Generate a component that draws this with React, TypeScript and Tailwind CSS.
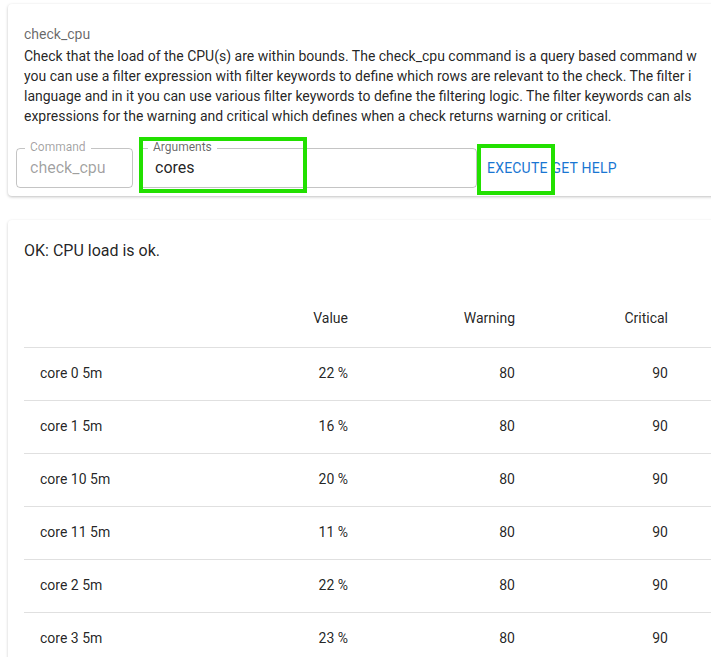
import React from 'react';

const rows = [
  ['core 0 5m', '22 %', '80', '90'],
  ['core 1 5m', '16 %', '80', '90'],
  ['core 10 5m', '20 %', '80', '90'],
  ['core 11 5m', '11 %', '80', '90'],
  ['core 2 5m', '22 %', '80', '90'],
  ['core 3 5m', '23 %', '80', '90'],
];

export default function App() {
  return (
    <div className="w-[711px] h-[657px] overflow-hidden bg-white text-[14px] text-[#000000de]" style={{ fontFamily: 'Roboto, sans-serif' }}>
      <div className="w-[740px] pl-[8px] pt-[4px]">
        <div className="relative rounded bg-white shadow-[0_1px_3px_rgba(0,0,0,0.25)] px-[16px] pt-[20px] pb-[8px]">
          <div className="text-[14px] text-[#00000099] leading-[20px]">check_cpu</div>
          <p className="mt-[2px] leading-[20px] w-[720px] whitespace-nowrap">
            Check that the load of the CPU(s) are within bounds. The check_cpu command is a query based command w<br />
            you can use a filter expression with filter keywords to define which rows are relevant to the check. The filter i<br />
            language and in it you can use various filter keywords to define the filtering logic. The filter keywords can als<br />
            expressions for the warning and critical which defines when a check returns warning or critical.
          </p>
          <div className="flex items-center mt-[22px] -ml-[8px] gap-[6px]">
            <div className="relative w-[117px] h-[40px] border border-[#0000003b] rounded px-[13px] flex items-center">
              <span className="absolute left-[8px] -top-[9px] bg-white px-[5px] text-[12px] leading-[14px] text-[#00000061]">Command</span>
              <div className="text-[16px] text-[#00000061]">check_cpu</div>
            </div>
            <div className="relative w-[338px] h-[40px] border border-[#0000003b] rounded px-[15px] flex items-center">
              <span className="absolute left-[8px] -top-[9px] bg-white px-[5px] text-[12px] leading-[14px] text-[#00000099]">Arguments</span>
              <div className="text-[16px]">cores</div>
              <div className="absolute left-[-1px] top-[-12px] w-[168px] h-[56px] border-[4px] border-[#22e000]"></div>
            </div>
            <div className="relative flex text-[14px] text-[#1976d2] uppercase tracking-[0.2px]">
              <span className="px-[4px] py-[6px]">Execute</span>
              <span className="py-[6px]">Get Help</span>
              <div className="absolute left-[-6px] top-[-8px] w-[78px] h-[51px] border-[4px] border-[#22e000]"></div>
            </div>
          </div>
        </div>
        <div className="mt-[24px] rounded bg-white shadow-[0_1px_3px_rgba(0,0,0,0.2)] px-[16px] pt-[19px]">
          <div className="text-[16px] leading-[24px]">OK: CPU load is ok.</div>
          <table className="mt-[27px] w-[700px] border-collapse">
            <thead>
              <tr className="h-[57px] border-b border-[#e0e0e0] text-right">
                <th className="w-[186px]"></th>
                <th className="font-normal w-[154px] pr-[16px]">Value</th>
                <th className="font-normal w-[167px] pr-[16px]">Warning</th>
                <th className="font-normal w-[153px] pr-[16px]">Critical</th>
                <th></th>
              </tr>
            </thead>
            <tbody>
              {rows.map((r) => (
                <tr key={r[0]} className="h-[53px] border-b border-[#e0e0e0] text-right">
                  <td className="text-left pl-[16px]">{r[0]}</td>
                  <td className="pr-[16px]">{r[1]}</td>
                  <td className="pr-[16px]">{r[2]}</td>
                  <td className="pr-[16px]">{r[3]}</td>
                  <td></td>
                </tr>
              ))}
            </tbody>
          </table>
        </div>
      </div>
    </div>
  );
}
